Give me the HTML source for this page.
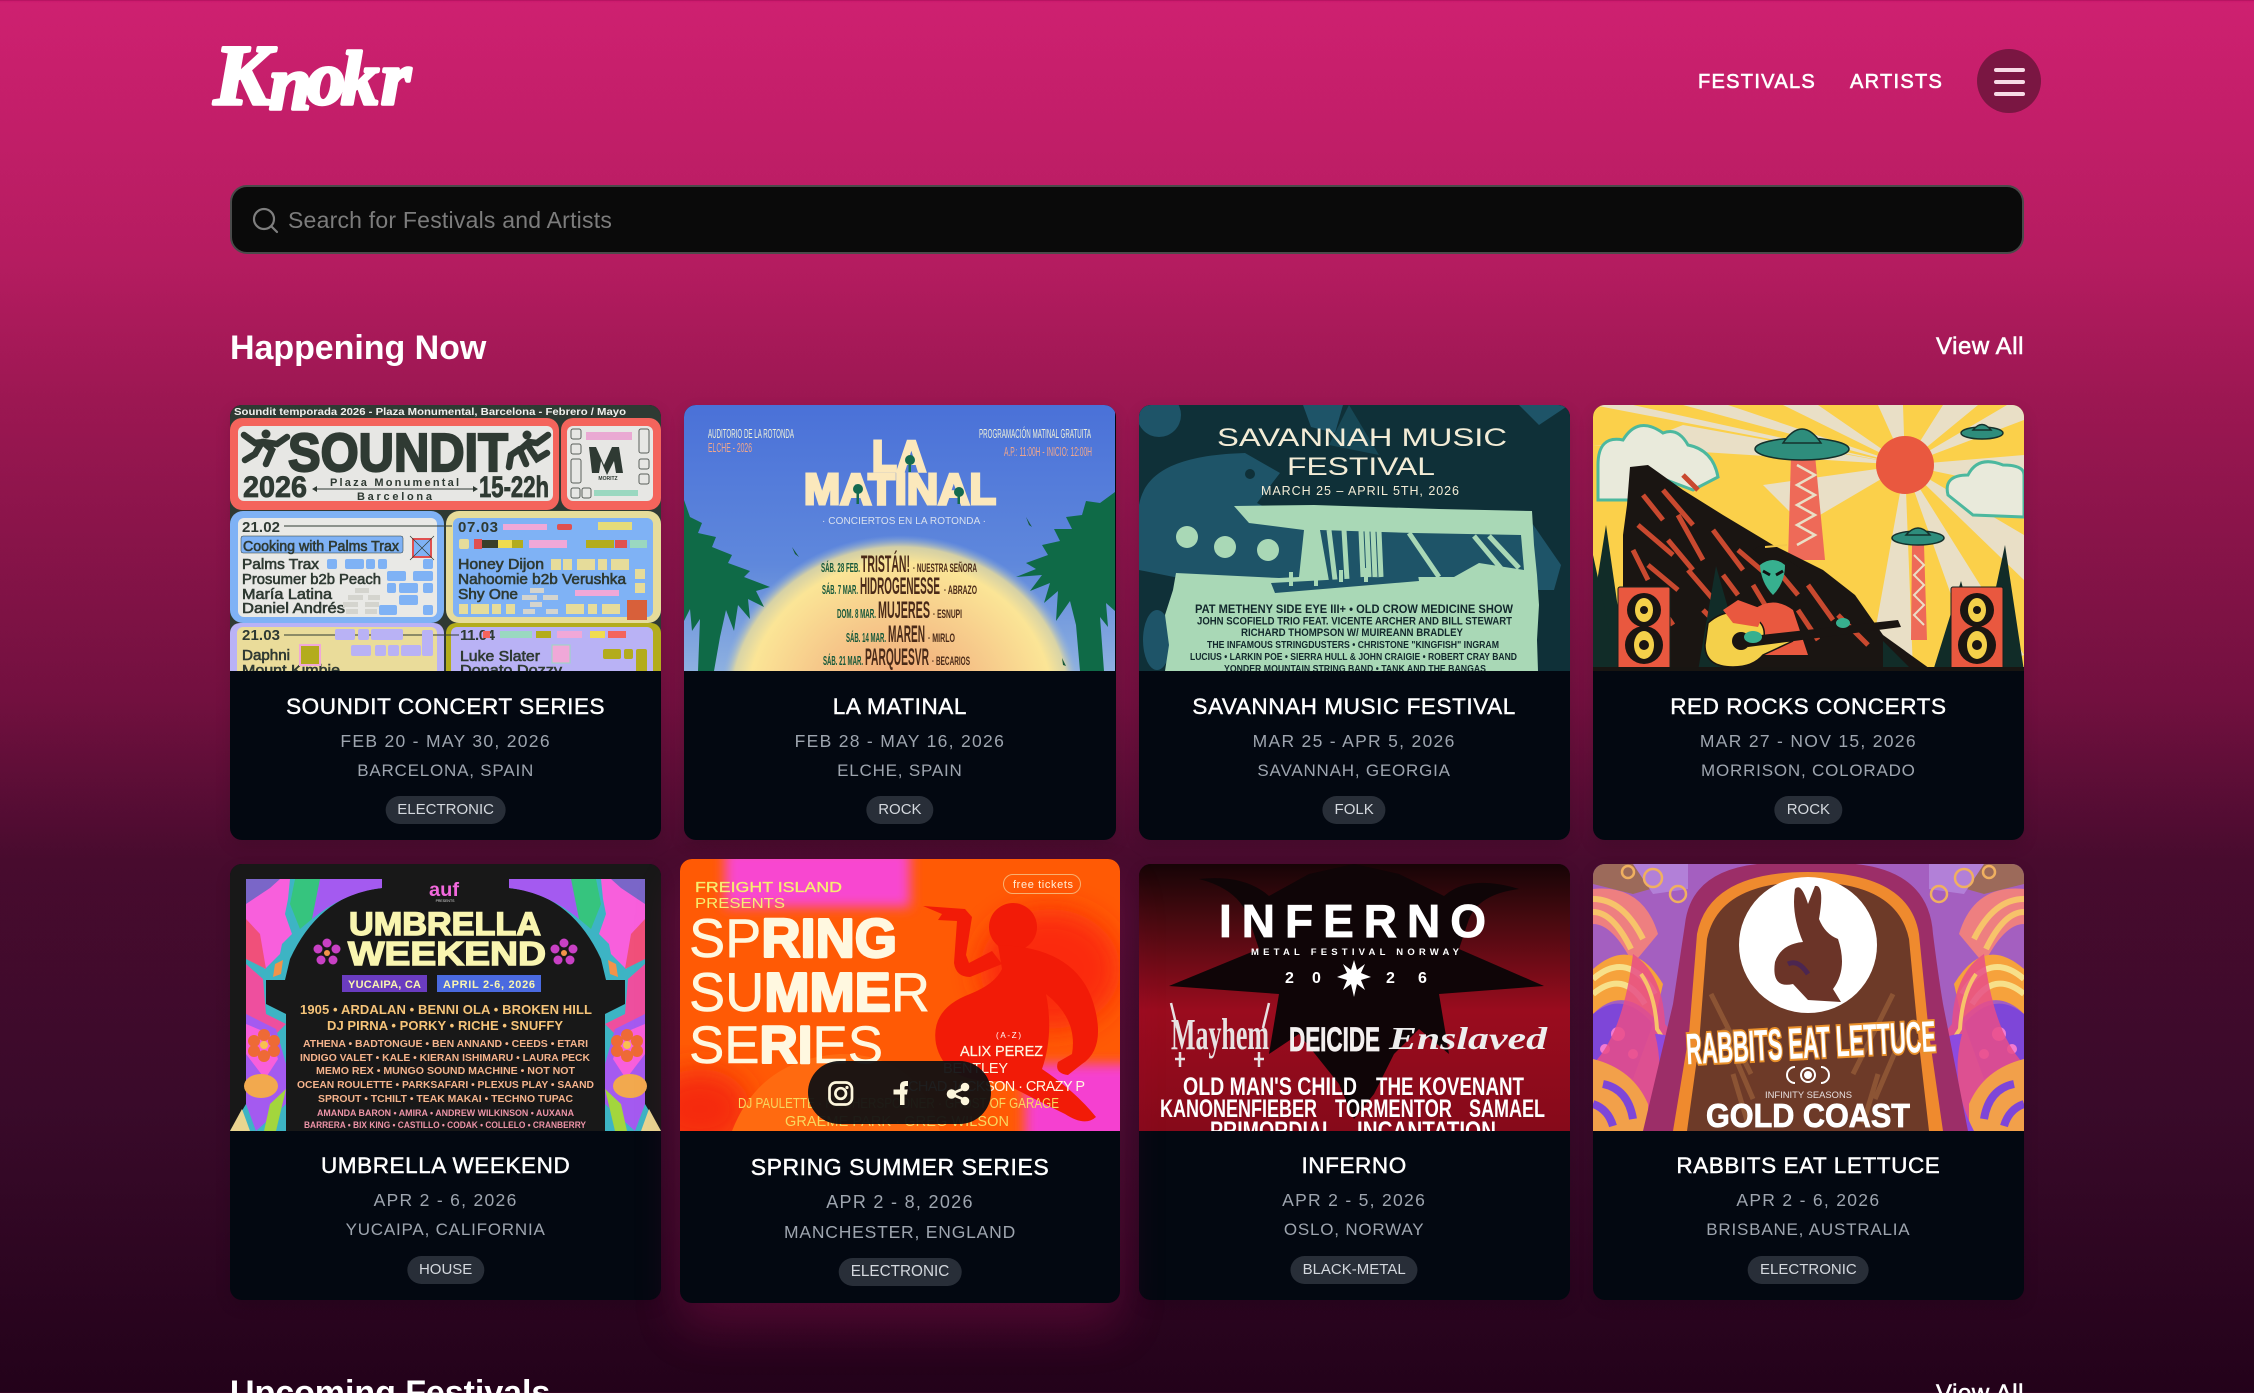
<!DOCTYPE html>
<html lang="en"><head><meta charset="utf-8"><title>Knokr</title>
<style>
*{box-sizing:border-box;margin:0;padding:0}
html,body{width:2254px;height:1393px;overflow:hidden}
body{position:relative;font-family:"Liberation Sans",sans-serif;color:#fff;
background:linear-gradient(180deg,#c9146a 0,#ce2070 3px,#b51c60 260px,#9c1752 400px,#72103f 700px,#480b2e 860px,#3a0a2a 1100px,#23021a 1393px)}
.abs{position:absolute;white-space:nowrap}
.nav{top:70px;font-size:20px;line-height:24px;letter-spacing:1.3px;-webkit-text-stroke:.6px #fff;color:#fff}
.menu{left:1977px;top:49px;width:64px;height:64px;border-radius:50%;background:#7a1642}
.menu i{position:absolute;left:17px;width:31px;height:3.5px;border-radius:2px;background:#f8dbe6}
.search{left:230px;top:185px;width:1794px;height:69px;background:#0a0a0a;border:2.5px solid #4a4a4a;border-radius:17px}
.search span{position:absolute;left:56px;top:20px;font-size:23px;line-height:27px;color:#7c7c7c;letter-spacing:.22px}
.search svg{position:absolute;left:19px;top:19px}
h2{position:absolute;font-size:34px;line-height:40px;font-weight:700;letter-spacing:-.05px;white-space:nowrap}
.va{font-size:24px;line-height:28px;right:230px;-webkit-text-stroke:.55px #fff;letter-spacing:.55px;white-space:nowrap;position:absolute}
.card{position:absolute;background:#030811;border-radius:12px;overflow:hidden;text-align:center;box-shadow:0 6px 16px rgba(0,0,0,.12)}
.card>svg{position:absolute;left:0;top:0;display:block}
.t,.d,.l{position:absolute;left:0;right:0;white-space:nowrap}
.t{font-size:22.5px;line-height:26px;letter-spacing:.58px;-webkit-text-stroke:.45px #fff;color:#fff}
.d{font-size:17.5px;line-height:21px;letter-spacing:1.3px;color:#9ea5af}
.l{font-size:17px;line-height:21px;letter-spacing:.8px;color:#9ea5af}
.p{position:absolute;left:50%;transform:translateX(-50%);height:28px;line-height:28px;border-radius:14px;background:#282e38;color:#d4d8de;font-size:15px;letter-spacing:0;padding:0 12px;white-space:nowrap}
.r1 .t{top:289px}.r1 .d{top:326px}.r1 .l{top:355px}.r1 .p{top:391px}
.r2 .t{top:289px}.r2 .d{top:326px}.r2 .l{top:355px}.r2 .p{top:392px}
.hov{left:680px;top:859px;width:440px;height:444px;box-shadow:0 26px 46px rgba(205,25,105,.22)}
.hov .t{top:295px;font-size:23px;letter-spacing:.55px}
.hov .d{top:333px;font-size:18px}.hov .l{top:363px;font-size:17.5px}.hov .p{top:399px;font-size:15.3px;padding:0 12px;height:28px}
.pill{position:absolute;left:808px;top:1061px;width:183px;height:63px;border-radius:32px;background:rgba(16,16,18,.94)}
svg text{font-family:"Liberation Sans",sans-serif}
</style></head><body>

<svg class="abs" style="left:200px;top:30px" width="240" height="100" viewBox="200 30 240 100">
<text font-size="76" font-weight="700" font-style="italic" fill="#fff" stroke="#fff" stroke-width="3.5" stroke-linejoin="round" style="font-family:'Liberation Serif',serif"><tspan x="214" y="104" font-size="86">K</tspan><tspan x="269" y="109">n</tspan><tspan x="307" y="104">o</tspan><tspan x="341" y="104">k</tspan><tspan x="381" y="104">r</tspan></text>
</svg>
<div class="abs nav" style="left:1698px">FESTIVALS</div>
<div class="abs nav" style="left:1850px">ARTISTS</div>
<div class="abs menu"><i style="top:19px"></i><i style="top:31px"></i><i style="top:43px"></i></div>
<div class="abs search"><svg width="28" height="28" viewBox="0 0 28 28" fill="none" stroke="#7e7e7e" stroke-width="2.2"><circle cx="13" cy="13" r="10"/><path d="M20.5 20.5 26 26" stroke-linecap="round"/></svg><span>Search for Festivals and Artists</span></div>

<h2 style="left:230px;top:328px">Happening Now</h2>
<div class="va" style="top:333px">View All</div>

<!-- Card 1 -->
<div class="card r1" style="left:230px;top:405px;width:431.25px;height:435px">
<svg width="431" height="266" viewBox="0 0 431 266">
<rect width="431" height="266" fill="#2f3a33"/>
<text x="4" y="10" font-size="10.5" font-weight="700" fill="#f0f0ec" textLength="392" lengthAdjust="spacingAndGlyphs">Soundit temporada 2026 - Plaza Monumental, Barcelona - Febrero / Mayo</text>
<rect x="0" y="13" width="329" height="92" rx="12" fill="#f4645c"/><rect x="8" y="21" width="315" height="75" rx="6" fill="#e7e7e4"/>
<rect x="331" y="13" width="100" height="92" rx="12" fill="#f4645c"/><rect x="337" y="21" width="86" height="75" rx="6" fill="#e7e7e4"/>
<text x="58" y="66" font-size="54" font-weight="700" fill="#2f3a33" textLength="220" lengthAdjust="spacingAndGlyphs" stroke="#2f3a33" stroke-width="2.2">SOUNDIT</text>
<g fill="none" stroke="#2f3a33" stroke-width="6.5" stroke-linecap="round">
<path d="M14 30l11 8 8-1 9 8-6 14M15 55l10-6 7-12M33 37l14 2 10-7"/>
<path d="M318 30l-11 8-8-1-9 8 6 14M317 48l-10 6-8-12M290 44l-9 6-2 12"/>
</g><circle cx="36" cy="29" r="4.5" fill="#2f3a33"/><circle cx="297" cy="30" r="4.5" fill="#2f3a33"/>
<text x="13" y="92" font-size="30" font-weight="700" fill="#2f3a33" textLength="64" lengthAdjust="spacingAndGlyphs" stroke="#2f3a33" stroke-width=".8">2026</text>
<text x="249" y="92" font-size="30" font-weight="700" fill="#2f3a33" textLength="70" lengthAdjust="spacingAndGlyphs" stroke="#2f3a33" stroke-width=".8">15-22h</text>
<text x="100" y="81" font-size="11" font-weight="700" fill="#2f3a33" textLength="129">Plaza Monumental</text>
<text x="127" y="95" font-size="11" font-weight="700" fill="#2f3a33" textLength="75">Barcelona</text>
<path d="M83 84h164" stroke="#2f3a33" stroke-width="1"/><path d="M82 84l5-3v6zM248 84l-5-3v6z" fill="#2f3a33"/>
<path d="M347 42l7 0 8 18 8-18 7 0 4 26h-7l-2-12-7 14-6-14-2 12h-7z" transform="translate(12 0)" fill="#2f3a33" />
<text x="378" y="75" font-size="5" font-weight="700" text-anchor="middle" fill="#2f3a33">MORITZ</text>
<g fill="none" stroke="#5a5f5a" stroke-width="1"><rect x="341" y="24" width="10" height="10" rx="2"/><rect x="341" y="39" width="10" height="10" rx="2"/><rect x="341" y="54" width="10" height="24" rx="2"/><rect x="341" y="83" width="9" height="10" rx="2"/><rect x="352" y="83" width="9" height="10" rx="2"/><rect x="409" y="24" width="10" height="24" rx="2"/><rect x="409" y="54" width="10" height="10" rx="2"/><rect x="409" y="69" width="10" height="10" rx="2"/></g>
<rect x="356" y="27" width="46" height="8" fill="#eaa9d3"/><rect x="364" y="85" width="44" height="6" fill="#9ad8c0"/>
<rect x="0" y="106" width="214" height="112" rx="13" fill="#7fb2f5"/><rect x="8" y="113" width="199" height="99" rx="6" fill="#e9e9e6"/>
<rect x="216" y="106" width="215" height="112" rx="13" fill="#e6dc9a"/><rect x="223" y="113" width="200" height="99" rx="6" fill="#7fb2f5"/>
<rect x="0" y="218" width="214" height="60" rx="10" fill="#b9b2f5"/><rect x="7" y="222" width="200" height="60" rx="6" fill="#eadc9a"/>
<rect x="216" y="218" width="215" height="60" rx="10" fill="#b3ac1c"/><rect x="221" y="222" width="202" height="60" rx="6" fill="#b9b2f5"/>
<g fill="#2f3a33" font-weight="700">
<text x="12" y="127" font-size="15" textLength="38">21.02</text>
<text x="228" y="127" font-size="15" textLength="40">07.03</text>
<text x="12" y="235" font-size="15" textLength="38">21.03</text>
<text x="230" y="235" font-size="15" textLength="35">11.04</text>
</g>
<path d="M54 121h168M54 230h175" stroke="#2f3a33" stroke-width="1"/>
<rect x="11" y="131" width="162" height="17" rx="2" fill="#7fb2f5" stroke="#2f3a33" stroke-width=".5"/>
<g font-size="14.5" font-weight="400" fill="#2f3a33" stroke="#2f3a33" stroke-width=".6">
<text x="13" y="146" textLength="156" lengthAdjust="spacingAndGlyphs">Cooking with Palms Trax</text>
<text x="12" y="164" textLength="77" lengthAdjust="spacingAndGlyphs">Palms Trax</text>
<text x="12" y="179" textLength="139" lengthAdjust="spacingAndGlyphs">Prosumer b2b Peach</text>
<text x="12" y="194" textLength="90" lengthAdjust="spacingAndGlyphs">María Latina</text>
<text x="12" y="208" textLength="103" lengthAdjust="spacingAndGlyphs">Daniel Andrés</text>
<text x="228" y="164" textLength="86" lengthAdjust="spacingAndGlyphs">Honey Dijon</text>
<text x="228" y="179" textLength="168" lengthAdjust="spacingAndGlyphs">Nahoomie b2b Verushka</text>
<text x="228" y="194" textLength="60" lengthAdjust="spacingAndGlyphs">Shy One</text>
<text x="12" y="255" textLength="48" lengthAdjust="spacingAndGlyphs">Daphni</text>
<text x="12" y="270" textLength="98" lengthAdjust="spacingAndGlyphs">Mount Kimbie</text>
<text x="230" y="256" textLength="80" lengthAdjust="spacingAndGlyphs">Luke Slater</text>
<text x="230" y="270" textLength="102" lengthAdjust="spacingAndGlyphs">Donato Dozzy</text>
</g>
<g fill="#7fb2f5"><rect x="97" y="154" width="10" height="10" rx="2"/><rect x="115" y="154" width="19" height="10" rx="2"/><rect x="136" y="154" width="9" height="10" rx="2"/><rect x="148" y="154" width="9" height="10" rx="2"/><rect x="193" y="154" width="10" height="10" rx="2"/><rect x="157" y="166" width="19" height="10" rx="2"/><rect x="183" y="166" width="20" height="10" rx="2"/><rect x="157" y="178" width="9" height="10" rx="2"/><rect x="169" y="178" width="19" height="10" rx="2"/><rect x="193" y="178" width="10" height="10" rx="2"/><rect x="169" y="190" width="19" height="10" rx="2"/><rect x="149" y="200" width="18" height="10" rx="2"/><rect x="193" y="200" width="10" height="10" rx="2"/></g>
<g fill="#d4d4ce"><rect x="125" y="183" width="14" height="5"/><rect x="118" y="190" width="15" height="5"/><rect x="138" y="190" width="12" height="5"/><rect x="113" y="197" width="15" height="5"/><rect x="135" y="197" width="14" height="5"/><rect x="116" y="204" width="12" height="5"/><rect x="135" y="204" width="12" height="5"/></g>
<rect x="183" y="134" width="18" height="18" fill="#7fb2f5" stroke="#e05050" stroke-width="2"/><path d="M180 131l24 24M204 131l-24 24" stroke="#2f3a33" stroke-width=".7"/>
<g fill="#e6dc9a"><rect x="229" y="134" width="10" height="10" rx="2"/><rect x="321" y="154" width="10" height="11"/><rect x="333" y="154" width="9" height="11"/><rect x="347" y="154" width="18" height="11"/><rect x="368" y="154" width="9" height="11"/><rect x="381" y="154" width="18" height="11"/><rect x="405" y="164" width="10" height="10"/><rect x="405" y="178" width="10" height="10"/><rect x="229" y="199" width="9" height="10"/><rect x="241" y="199" width="18" height="10"/><rect x="262" y="199" width="9" height="10"/><rect x="276" y="199" width="9" height="10"/><rect x="336" y="199" width="18" height="10"/><rect x="358" y="199" width="9" height="10"/><rect x="372" y="199" width="18" height="10"/></g>
<g><rect x="244" y="134" width="8" height="10" fill="#e05050"/><rect x="252" y="135" width="16" height="8" fill="#3a3f2a"/><rect x="268" y="135" width="14" height="8" fill="#f0dc50"/><rect x="282" y="135" width="11" height="8" fill="#b3ac1c"/><rect x="299" y="135" width="38" height="8" fill="#f0a8d8"/><rect x="356" y="135" width="28" height="8" fill="#b3ac1c"/><rect x="385" y="135" width="12" height="8" fill="#e05050"/><rect x="400" y="135" width="17" height="8" fill="#9ad8c0"/><rect x="327" y="119" width="15" height="6" rx="2" fill="#e05050"/><rect x="368" y="117" width="34" height="8" fill="#e6dc7a"/><rect x="273" y="119" width="44" height="6" fill="#f0a8d8"/><rect x="345" y="185" width="44" height="6" fill="#f0a8d8"/><rect x="397" y="195" width="20" height="20" fill="#d8603a"/></g>
<g fill="#d4d4ce"><rect x="300" y="183" width="14" height="5"/><rect x="292" y="190" width="15" height="5"/><rect x="313" y="190" width="15" height="5"/><rect x="300" y="197" width="12" height="5"/><rect x="293" y="204" width="12" height="5"/><rect x="316" y="204" width="12" height="5"/></g>
<g fill="#b9b2f5"><rect x="105" y="224" width="20" height="11" rx="2"/><rect x="128" y="224" width="11" height="11" rx="2"/><rect x="141" y="224" width="32" height="11" rx="2"/><rect x="192" y="225" width="11" height="26" rx="2"/><rect x="121" y="240" width="20" height="11" rx="2"/><rect x="145" y="240" width="11" height="11" rx="2"/><rect x="158" y="240" width="11" height="11" rx="2"/><rect x="171" y="240" width="20" height="11" rx="2"/></g>
<rect x="70" y="240" width="20" height="20" fill="#b3ac1c" stroke="#f0a8d8" stroke-width="2"/>
<g><rect x="270" y="226" width="32" height="7" fill="#9ad8c0"/><rect x="306" y="226" width="15" height="7" fill="#b3ac1c"/><rect x="327" y="226" width="25" height="7" fill="#f0a8d8"/><rect x="360" y="226" width="15" height="7" fill="#f0dc50"/><rect x="378" y="226" width="18" height="7" fill="#f4645c"/><rect x="253" y="226" width="7" height="7" fill="#f4645c"/><rect x="373" y="244" width="18" height="10" rx="2" fill="#b3ac1c"/><rect x="394" y="244" width="9" height="10" rx="2" fill="#b3ac1c"/><rect x="406" y="244" width="11" height="24" rx="2" fill="#b3ac1c"/></g>
<rect x="322" y="240" width="18" height="18" fill="#f0a8d8" stroke="#9ad8c0" stroke-width="1"/>
</svg>
<div class="t">SOUNDIT CONCERT SERIES</div><div class="d">FEB 20 - MAY 30, 2026</div><div class="l">BARCELONA, SPAIN</div><div class="p">ELECTRONIC</div>
</div>

<!-- Card 2 -->
<div class="card r1" style="left:684.25px;top:405px;width:431.25px;height:435px">
<svg width="431" height="266" viewBox="0 0 431 266">
<defs><linearGradient id="lm" x1="0" y1="0" x2="0" y2="1"><stop offset="0" stop-color="#4a71d8"/><stop offset=".6" stop-color="#5f88dc"/><stop offset="1" stop-color="#8db0e0"/></linearGradient>
<radialGradient id="sun" cx=".5" cy=".5" r=".5"><stop offset="0" stop-color="#f0a072"/><stop offset=".5" stop-color="#f6c88a"/><stop offset=".84" stop-color="#fbe596"/><stop offset=".93" stop-color="#e8dc9c" stop-opacity=".85"/><stop offset="1" stop-color="#8db0e0" stop-opacity="0"/></radialGradient></defs>
<rect width="431" height="266" fill="url(#lm)"/>
<ellipse cx="216" cy="300" rx="182" ry="170" fill="url(#sun)"/>
<g fill="#eef0d8"><text x="24" y="33" font-size="13" textLength="86" lengthAdjust="spacingAndGlyphs">AUDITORIO DE LA ROTONDA</text>
<text x="295" y="33" font-size="13" textLength="112" lengthAdjust="spacingAndGlyphs">PROGRAMACIÓN MATINAL GRATUITA</text></g>
<g fill="#f0a68c"><text x="24" y="47" font-size="13" textLength="44" lengthAdjust="spacingAndGlyphs">ELCHE - 2026</text><text x="320" y="51" font-size="13" textLength="88" lengthAdjust="spacingAndGlyphs">A.P.: 11:00H - INICIO: 12:00H</text></g>
<g fill="#fbe8bc" font-weight="700" stroke="#fbe8bc" stroke-width="3" stroke-linejoin="miter"><text x="188" y="66" font-size="44" textLength="54" lengthAdjust="spacingAndGlyphs">LA</text><text x="120" y="99" font-size="44" textLength="192" lengthAdjust="spacingAndGlyphs">MATINAL</text></g>
<g fill="#146a4f"><circle cx="226" cy="55" r="5"/><rect x="224.5" y="56" width="2.5" height="11"/><circle cx="174" cy="84" r="5"/><rect x="172.5" y="84" width="2.5" height="15"/><circle cx="275" cy="87" r="5"/><rect x="273.5" y="87" width="2.5" height="12"/></g>
<text x="138" y="119" font-size="10" fill="#d8e0ee" textLength="164" lengthAdjust="spacing">· CONCIERTOS EN LA ROTONDA ·</text>
<g font-weight="700">
<g fill="#17583a" font-size="13"><text x="137" y="167" textLength="39" lengthAdjust="spacingAndGlyphs">SÁB. 28 FEB.</text><text x="138" y="189" textLength="36" lengthAdjust="spacingAndGlyphs">SÁB. 7 MAR.</text><text x="153" y="213" textLength="39" lengthAdjust="spacingAndGlyphs">DOM. 8 MAR.</text><text x="162" y="237" textLength="40" lengthAdjust="spacingAndGlyphs">SÁB. 14 MAR.</text><text x="139" y="260" textLength="40" lengthAdjust="spacingAndGlyphs">SÁB. 21 MAR.</text></g>
<g fill="#4a2a18" font-size="24"><text x="177" y="167" textLength="49" lengthAdjust="spacingAndGlyphs">TRISTÁN!</text><text x="176" y="189" textLength="80" lengthAdjust="spacingAndGlyphs">HIDROGENESSE</text><text x="194" y="213" textLength="52" lengthAdjust="spacingAndGlyphs">MUJERES</text><text x="204" y="237" textLength="37" lengthAdjust="spacingAndGlyphs">MAREN</text><text x="181" y="260" textLength="64" lengthAdjust="spacingAndGlyphs">PARQUESVR</text></g>
<g fill="#4a2a18" font-size="12"><text x="229" y="167" textLength="64" lengthAdjust="spacingAndGlyphs">· NUESTRA SEÑORA</text><text x="260" y="189" textLength="33" lengthAdjust="spacingAndGlyphs">· ABRAZO</text><text x="249" y="213" textLength="29" lengthAdjust="spacingAndGlyphs">· ESNUPI</text><text x="244" y="237" textLength="27" lengthAdjust="spacingAndGlyphs">· MIRLO</text><text x="248" y="260" textLength="38" lengthAdjust="spacingAndGlyphs">· BECARIOS</text></g></g>
<g fill="#0f6a47"><path d="M0 95 6 112 18 118 14 128 32 132 28 142 48 150 44 158 66 166 60 172 86 182 72 186 80 202 64 194 66 214 54 200 50 226 42 205 36 232 30 266 14 266 16 214 8 226 6 204 0 216Z"/><path d="M431 87 416 98 402 96 398 110 382 112 388 124 370 124 376 136 358 140 364 150 342 158 352 164 332 172 358 170 346 186 366 178 360 198 374 186 372 216 386 196 392 220 396 266 420 266 416 212 424 222 422 198 431 206Z"/></g>
<path d="M108 142l7 10-4-3zM342 112l6 10-3-2zM378 253l4 8-3-1z" fill="#17583a"/>
</svg>
<div class="t">LA MATINAL</div><div class="d">FEB 28 - MAY 16, 2026</div><div class="l">ELCHE, SPAIN</div><div class="p">ROCK</div>
</div>

<!-- Card 3 -->
<div class="card r1" style="left:1138.5px;top:405px;width:431.25px;height:435px">
<svg width="431" height="266" viewBox="0 0 431 266">
<rect width="431" height="266" fill="#0f3038"/>
<circle cx="20" cy="10" r="22" fill="#1e5468"/><path d="M164 0h40l-8 28-24-6zM380 0h50l-30 20z" fill="#1e5468"/><path d="M210 0l30 50-50-10z" fill="#174755"/>
<ellipse cx="18" cy="235" rx="14" ry="30" fill="#1e5468"/>
<path d="M0 100 C6 66 40 50 106 48 L141 68 L118 98 L170 125 L170 178 L35 172 L0 165Z" fill="#1e5468"/>
<circle cx="111" cy="69" r="5" fill="#0f3038"/>
<path d="M393 118 L422 160 L415 185 L396 185Z" fill="#1e5468"/>
<path d="M95 101 L175 100 L300 104 L393 106 L395 140 L398 170 L400 200 L398 235 L399 266 L26 266 L30 240 L26 210 L34 185 L37 168 L140 173 L160 172 L165 125 L110 118Z" fill="#a9d8b6"/>
<ellipse cx="48" cy="132" rx="11" ry="11" fill="#a9d8b6"/><ellipse cx="86" cy="142" rx="11" ry="11" fill="#a9d8b6"/><ellipse cx="129" cy="145" rx="11" ry="11" fill="#a9d8b6"/>
<path d="M181 125 L275 128 L382 130 L385 165 L340 158 L315 172 L240 172 L190 176 Z" fill="#1e5468"/>
<path d="M190 125l6 50M205 125l3 50M222 126l2 46M228 126l2 46M234 126l2 46M240 126l2 46M270 128l30 44M335 131l30 36M350 131l30 32" stroke="#a9d8b6" stroke-width="5" fill="none"/>
<path d="M132 178 L279 170 L280 176 L136 188Z" fill="#1e5468"/>
<path d="M150 167h4v14h-4zM175 167h4v14h-4zM200 165h4v12h-4zM225 163h4v14h-4z" fill="#a9d8b6"/>
<g fill="#f3ecd6" text-anchor="start"><text x="78" y="41" font-size="25" textLength="290" lengthAdjust="spacingAndGlyphs">SAVANNAH MUSIC</text><text x="148" y="70" font-size="25" textLength="148" lengthAdjust="spacingAndGlyphs">FESTIVAL</text><text x="122" y="90" font-size="12.5" textLength="198">MARCH 25 – APRIL 5TH, 2026</text></g>
<g fill="#12282c" font-weight="700" font-size="12">
<text x="56" y="208" textLength="318" lengthAdjust="spacingAndGlyphs">PAT METHENY SIDE EYE III+ • OLD CROW MEDICINE SHOW</text>
<text x="58" y="219.5" font-size="11" textLength="315" lengthAdjust="spacingAndGlyphs">JOHN SCOFIELD TRIO FEAT. VICENTE ARCHER AND BILL STEWART</text>
<text x="102" y="231" font-size="11" textLength="222" lengthAdjust="spacingAndGlyphs">RICHARD THOMPSON W/ MUIREANN BRADLEY</text>
<text x="68" y="243" font-size="10" textLength="292" lengthAdjust="spacingAndGlyphs">THE INFAMOUS STRINGDUSTERS • CHRISTONE "KINGFISH" INGRAM</text>
<text x="51" y="255" font-size="10" textLength="327" lengthAdjust="spacingAndGlyphs">LUCIUS • LARKIN POE • SIERRA HULL &amp; JOHN CRAIGIE • ROBERT CRAY BAND</text>
<text x="85" y="267" font-size="10" textLength="262" lengthAdjust="spacingAndGlyphs">YONDER MOUNTAIN STRING BAND • TANK AND THE BANGAS</text></g>
</svg>
<div class="t">SAVANNAH MUSIC FESTIVAL</div><div class="d">MAR 25 - APR 5, 2026</div><div class="l">SAVANNAH, GEORGIA</div><div class="p">FOLK</div>
</div>

<!-- Card 4 -->
<div class="card r1" style="left:1592.75px;top:405px;width:431.25px;height:435px">
<svg width="431" height="266" viewBox="0 0 431 266">
<rect width="431" height="266" fill="#fbd04a"/>
<g fill="#e9dfc6"><path d="M312 60 L0 0 L40 0ZM312 60 L90 0 L135 0ZM312 60 L190 0 L225 0ZM312 60 L285 0 L310 0ZM312 60 L350 0 L385 0ZM312 60 L431 -10 L431 15ZM312 60 L431 50 L431 85ZM312 60 L431 130 L431 175ZM312 60 L431 250 L385 266ZM312 60 L320 266 L275 266ZM312 60 L210 120 L170 80ZM312 60 L90 20 L40 40 L0 40Z"/></g>
<path d="M5 60 Q5 30 30 35 Q45 10 70 28 Q85 22 95 40 Q120 45 125 72 L100 85 L60 70 L45 95 L5 95Z" fill="#e9eadb" stroke="#4cb89e" stroke-width="3"/>
<path d="M355 90 Q350 70 375 70 Q385 50 410 60 Q431 60 431 70 L431 112 L380 110 Z" fill="#e9eadb" stroke="#4cb89e" stroke-width="3"/>
<circle cx="312" cy="60" r="29" fill="#e9583f"/>
<path d="M198 50 L222 50 L232 155 L195 155Z" fill="#ee6a58"/><path d="M204 60l18 10-18 10 18 10-18 10 18 10-18 10 18 10-18 10" fill="none" stroke="#e9dfc6" stroke-width="2.5"/>
<path d="M319 140h12l3 95h-16z" fill="#ee6a58"/><path d="M321 150l10 10-10 10 10 10-10 10 10 10-10 10 10 10" stroke="#e9dfc6" stroke-width="2" fill="none"/>
<g fill="#2e8d7c" stroke="#15312c" stroke-width="1.5"><ellipse cx="209" cy="44" rx="47" ry="11"/><path d="M190 38 Q209 10 228 38Z"/><ellipse cx="389" cy="28" rx="21" ry="6"/><path d="M380 25 Q389 14 398 25Z"/><ellipse cx="325" cy="133" rx="26" ry="7"/><path d="M313 130 Q325 116 337 130Z"/></g>
<path d="M37 62 L55 60 L90 85 L130 110 L180 140 L230 165 L262 190 L290 230 L340 266 L30 266 L30 130 L34 100Z" fill="#1a1512"/>
<g stroke="#c9492f" stroke-width="5" fill="none"><path d="M50 90l20 25M70 85l30 35M45 120l35 30M85 110l25 45M120 125l30 40M55 160l30 25M95 165l30 35M145 145l35 30M180 160l25 30M60 190l20 30M40 145l15 30M110 205l30 30M215 180l25 35M245 210l30 30M160 180l15 25M90 70l15 15M130 170l15 20M75 135l25 30M205 205l20 30"/></g>
<g fill="#112c28"><path d="M13 266 L-10 266 L13 120 L34 266ZM410 266 L385 266 L412 140 L431 266Z"/><path d="M0 266V150L13 210 24 266Z"/><path d="M105 266l18 -105 30 105z"/><path d="M340 266l28-90 25 90zM290 266l0-30 30 30z"/></g>
<g fill="#e9583f" stroke="#15211d"><rect x="25" y="182" width="52" height="82" rx="2"/><rect x="358" y="182" width="52" height="82" rx="2"/></g>
<g fill="#1a1512"><circle cx="51" cy="205" r="17"/><circle cx="51" cy="240" r="19"/><circle cx="384" cy="205" r="17"/><circle cx="384" cy="240" r="19"/></g>
<g fill="#f4d04a"><ellipse cx="51" cy="205" rx="9" ry="12"/><ellipse cx="51" cy="240" rx="10" ry="14"/><ellipse cx="384" cy="205" rx="9" ry="12"/><ellipse cx="384" cy="240" rx="10" ry="14"/></g>
<g fill="#1a1512"><circle cx="51" cy="205" r="4"/><circle cx="51" cy="240" r="5"/><circle cx="384" cy="205" r="4"/><circle cx="384" cy="240" r="5"/></g>
<path d="M160 145 Q180 130 195 155 L210 165 L170 165Z" fill="#1a1512"/><path d="M172 142 l22 -2" stroke="#f4c84a" stroke-width="2"/>
<path d="M167 160 Q180 150 192 160 Q192 178 180 190 Q168 178 167 160Z" fill="#37b08f"/><path d="M170 166l7 4M190 166l-7 4" stroke="#111" stroke-width="3"/>
<path d="M160 205 Q180 190 200 205 L215 250 L145 250Z" fill="#e9583f"/>
<path d="M115 218 Q135 200 160 212 Q175 220 170 236 L200 236 L170 250 Q160 262 140 262 Q112 262 112 240Z" fill="#f4d04a" stroke="#1a1512" stroke-width="1.5"/>
<path d="M150 232 L305 215 L308 222 L155 242Z" fill="#1a1512"/><circle cx="148" cy="236" r="9" fill="#1a1512"/>
<path d="M130 205 L145 195 L172 205 L165 222 L140 218Z" fill="#e9583f"/><ellipse cx="160" cy="232" rx="9" ry="6" fill="#37b08f"/><ellipse cx="250" cy="218" rx="7" ry="5" fill="#37b08f"/>
<rect y="262" width="431" height="4" fill="#181512"/>
</svg>
<div class="t">RED ROCKS CONCERTS</div><div class="d">MAR 27 - NOV 15, 2026</div><div class="l">MORRISON, COLORADO</div><div class="p">ROCK</div>
</div>

<!-- Card 5 -->
<div class="card r2" style="left:230px;top:864px;width:431.25px;height:436px">
<svg width="431" height="267" viewBox="0 0 431 267">
<rect width="431" height="267" fill="#181818"/>
<g id="side">
<path d="M16 22 Q16 15 24 15 L152 15 L152 24 Q90 30 60 95 L55 116 L36 116 L36 140 L56 150 L56 267 L0 267 L16 240Z" fill="#3db4c4"/>
<path d="M65 15 L100 15 L95 35 L82 55 L70 65 L60 40Z" fill="#36c47e"/>
<path d="M90 15 L152 15 L152 24 Q115 28 82 55Z" fill="#a45af0"/>
<path d="M16 15 L60 15 L58 35 L55 50 L62 70 L52 80 L50 90 L35 105 L16 85Z" fill="#f85fdc"/>
<path d="M16 55 L30 70 L36 105 L16 95Z" fill="#f0507a"/>
<path d="M16 15 L50 15 L40 24 L16 40Z" fill="#7a66c8"/>
<path d="M16 100 L33 115 L36 150 L56 160 L46 170 L16 150Z" fill="#ee4f9e"/>
<path d="M16 150 L46 165 L56 200 L56 240 L26 267 L16 240Z" fill="#a45af0"/>
<path d="M16 160 L40 170 L48 195 L35 215 L16 190Z" fill="#f85fdc"/>
<g fill="#ee6a36"><circle cx="34" cy="171" r="6"/><circle cx="44" cy="177" r="6"/><circle cx="44" cy="187" r="6"/><circle cx="34" cy="192" r="6"/><circle cx="24" cy="187" r="6"/><circle cx="24" cy="177" r="6"/></g><circle cx="34" cy="181" r="4" fill="#f8c050"/>
<ellipse cx="31" cy="222" rx="17" ry="12" fill="#f2a94e"/>
<path d="M56 225 L46 267 L34 267 L40 240Z" fill="#a3d63d"/>
<path d="M0 267 L12 245 L20 267Z" fill="#e9d690"/>
<path d="M45 100l8 -4 -2 14 -8 3z" fill="#f2934a"/>
</g>
<use href="#side" transform="translate(431 0) scale(-1 1)"/>
<text x="214" y="32" font-size="19" font-weight="700" text-anchor="middle" fill="#f268dc" textLength="30" lengthAdjust="spacingAndGlyphs">auf</text>
<text x="215" y="38" font-size="3.5" text-anchor="middle" fill="#ddd">PRESENTS</text>
<g fill="#f9f5b0" font-weight="700" stroke="#f9f5b0" stroke-width="1.4"><text x="119" y="71" font-size="32" textLength="192" lengthAdjust="spacingAndGlyphs">UMBRELLA</text><text x="118" y="101" font-size="33" textLength="198" lengthAdjust="spacingAndGlyphs">WEEKEND</text></g>
<g fill="#c840c4"><g id="fl"><circle cx="97" cy="79" r="4.5"/><circle cx="106" cy="85" r="4.5"/><circle cx="103" cy="96" r="4.5"/><circle cx="91" cy="96" r="4.5"/><circle cx="88" cy="85" r="4.5"/></g><use href="#fl" x="237"/></g><circle cx="97" cy="89" r="3" fill="#f2934a"/><circle cx="334" cy="89" r="3" fill="#f2934a"/>
<rect x="112" y="111" width="85" height="17" fill="#6a3cc0"/><rect x="207" y="111" width="104" height="17" fill="#4a6ae0"/>
<g font-size="11" font-weight="700" fill="#f9f5b0"><text x="118" y="124" textLength="73">YUCAIPA, CA</text><text x="213" y="124" textLength="92">APRIL 2-6, 2026</text></g>
<g font-weight="700" fill="#f6c479" font-size="13"><text x="70" y="150" textLength="292">1905 • ARDALAN • BENNI OLA • BROKEN HILL</text><text x="97" y="166" textLength="236">DJ PIRNA • PORKY • RICHE • SNUFFY</text></g>
<g font-weight="700" fill="#f5b38c" font-size="10.5"><text x="73" y="183" textLength="285" lengthAdjust="spacingAndGlyphs">ATHENA • BADTONGUE • BEN ANNAND • CEEDS • ETARI</text><text x="70" y="197" textLength="290" lengthAdjust="spacingAndGlyphs">INDIGO VALET • KALE • KIERAN ISHIMARU • LAURA PECK</text><text x="86" y="210" textLength="259" lengthAdjust="spacingAndGlyphs">MEMO REX • MUNGO SOUND MACHINE • NOT NOT</text><text x="67" y="224" textLength="297" lengthAdjust="spacingAndGlyphs">OCEAN ROULETTE • PARKSAFARI • PLEXUS PLAY • SAAND</text><text x="88" y="238" textLength="255" lengthAdjust="spacingAndGlyphs">SPROUT • TCHILT • TEAK MAKAI • TECHNO TUPAC</text></g>
<g font-weight="700" fill="#ee94a8" font-size="9"><text x="87" y="252" textLength="257" lengthAdjust="spacingAndGlyphs">AMANDA BARON • AMIRA • ANDREW WILKINSON • AUXANA</text><text x="74" y="264" textLength="282" lengthAdjust="spacingAndGlyphs">BARRERA • BIX KING • CASTILLO • CODAK • COLLELO • CRANBERRY</text></g>
</svg>
<div class="t">UMBRELLA WEEKEND</div><div class="d">APR 2 - 6, 2026</div><div class="l">YUCAIPA, CALIFORNIA</div><div class="p">HOUSE</div>
</div>

<!-- Card 7 -->
<div class="card r2" style="left:1138.5px;top:864px;width:431.25px;height:436px">
<svg width="431" height="267" viewBox="0 0 431 267">
<defs><linearGradient id="inf" x1="0" y1="0" x2="0" y2="1"><stop offset="0" stop-color="#160406"/><stop offset=".22" stop-color="#4a0a10"/><stop offset=".55" stop-color="#9a0c1e"/><stop offset="1" stop-color="#860a1a"/></linearGradient></defs>
<rect width="431" height="267" fill="url(#inf)"/>
<path d="M60 15 Q105 10 130 32 L170 10 L215 0 L260 10 L305 32 Q330 10 380 25 Q340 30 330 55 L320 85 L405 122 L300 130 L310 190 L280 165 L255 190 L235 230 L215 255 L200 220 L180 195 L160 170 L130 190 L140 130 L30 122 L120 85 L110 55 Q100 25 60 15Z" fill="#0f0507"/>
<g fill="#fff" font-weight="700"><text x="80" y="73" font-size="46" textLength="267" lengthAdjust="spacing" stroke="#fff" stroke-width=".8">INFERNO</text>
<text x="112" y="91" font-size="9.5" textLength="208" lengthAdjust="spacing">METAL FESTIVAL NORWAY</text>
<text x="146" y="119" font-size="16">2</text><text x="173" y="119" font-size="16">0</text><text x="247" y="119" font-size="16">2</text><text x="279" y="119" font-size="16">6</text></g>
<path d="M215 96l3 10 8-6-4 9 10 4-10 3 4 10-8-6-3 13-3-13-8 6 4-10-10-3 10-4-4-9 8 6z" fill="#fff"/>
<text x="32" y="185" font-size="44" font-weight="700" fill="#e8e2e2" textLength="98" lengthAdjust="spacingAndGlyphs" style="font-family:'Liberation Serif',serif">Mayhem</text>
<path d="M36 195h10M41 188v15M115 195h10M120 188v15M32 139l6 25M130 139l-6 25" stroke="#e8e2e2" stroke-width="2.5" fill="none"/>
<text x="150" y="187" font-size="34" font-weight="700" fill="#f4f0f0" textLength="91" lengthAdjust="spacingAndGlyphs" stroke="#f4f0f0" stroke-width=".8">DEICIDE</text>
<text x="250" y="185" font-size="32" font-weight="700" font-style="italic" fill="#eee" textLength="158" lengthAdjust="spacingAndGlyphs" style="font-family:'Liberation Serif',serif">Enslaved</text>
<g fill="#fff" font-weight="700" font-size="25">
<text x="44" y="231" textLength="174" lengthAdjust="spacingAndGlyphs">OLD MAN'S CHILD</text><text x="237" y="231" textLength="148" lengthAdjust="spacingAndGlyphs">THE KOVENANT</text>
<text x="21" y="253" textLength="157" lengthAdjust="spacingAndGlyphs">KANONENFIEBER</text><text x="196" y="253" textLength="117" lengthAdjust="spacingAndGlyphs">TORMENTOR</text><text x="330" y="253" textLength="76" lengthAdjust="spacingAndGlyphs">SAMAEL</text>
<text x="71" y="275" textLength="124" lengthAdjust="spacingAndGlyphs">PRIMORDIAL</text><text x="218" y="275" textLength="139" lengthAdjust="spacingAndGlyphs">INCANTATION</text></g>
</svg>
<div class="t">INFERNO</div><div class="d">APR 2 - 5, 2026</div><div class="l">OSLO, NORWAY</div><div class="p">BLACK-METAL</div>
</div>

<!-- Card 8 -->
<div class="card r2" style="left:1592.75px;top:864px;width:431.25px;height:436px">
<svg width="431" height="267" viewBox="0 0 431 267">
<rect width="431" height="267" fill="#a45fc0"/>
<g id="rl">
<path d="M0 0H75V20L40 30 0 20Z" fill="#9c6a5a"/><path d="M40 0H95V25L60 30Z" fill="#b280d8"/>
<g fill="none" stroke="#f0b060" stroke-width="2.5"><circle cx="60" cy="14" r="9"/><circle cx="85" cy="30" r="8"/><circle cx="35" cy="8" r="6"/></g>
<path d="M0 25 Q50 20 65 70 L40 100 Q20 60 0 60Z" fill="#ee7f80"/><path d="M0 35 Q30 35 50 75M0 48 Q20 48 38 85" stroke="#f7c36a" stroke-width="6" fill="none"/>
<path d="M0 105 Q40 70 70 120 L62 155 Q30 120 0 150Z" fill="#f6a23c"/><path d="M0 115 Q35 85 62 130M0 130 Q30 105 52 140" stroke="#f7e08a" stroke-width="6" fill="none"/>
<path d="M0 150 Q30 125 60 160 L40 215 L0 195Z" fill="#7e46d8"/><circle cx="25" cy="170" r="7" fill="#f37ad0"/><circle cx="40" cy="190" r="5" fill="#f37ad0"/><circle cx="12" cy="185" r="5" fill="#f37ad0"/>
<path d="M40 90 Q70 110 72 160 Q90 180 95 215 L90 267 L0 267 V200 Q30 170 40 90Z" fill="#e84e88" opacity=".85"/>
<path d="M48 110 Q62 130 64 165 Q78 185 84 215" stroke="#f7c36a" stroke-width="4" fill="none"/>
<path d="M0 195 Q40 205 55 240 L55 267 H0Z" fill="#f2a04a"/><path d="M10 220 Q35 225 40 255M0 240 Q15 245 20 262" stroke="#7e46d8" stroke-width="8" fill="none"/>
<path d="M62 170 Q105 170 100 240 L85 267 H50 Q75 220 62 170Z" fill="#8d4ae0"/><circle cx="80" cy="205" r="8" fill="#d64fc8"/><circle cx="72" cy="240" r="6" fill="#d64fc8"/>
</g>
<use href="#rl" transform="translate(431 0) scale(-1 1)"/>
<path d="M92 60 Q100 -10 215 0 Q335 -10 340 70 Q345 110 350 140 L375 267 H50 L80 140Z" fill="#9c2e68"/>
<path d="M104 70 Q116 8 215 8 Q316 8 326 70 L336 170 L350 267 H80 L96 170Z" fill="#ef8a2e"/>
<path d="M114 75 Q126 18 215 18 Q304 18 316 75 L326 180 L336 267 H94 L106 180Z" fill="#6d3a28"/>
<g stroke="#8c5434" stroke-width="5" fill="none"><path d="M118 130l40 80M130 165l30 70M300 130l-40 80M312 165l-30 70M140 210l15 50M285 210l-15 50"/></g>
<ellipse cx="215" cy="81" rx="69" ry="68" fill="#fff"/>
<path d="M202 25 Q208 18 215 40 L222 22 Q232 20 226 55 Q232 70 245 75 Q255 105 240 125 L248 138 L215 136 L200 120 Q178 125 182 98 Q188 80 210 78 Q198 50 202 25Z" fill="#6b3428"/>
<path d="M195 100 Q205 95 215 110" stroke="#4c2650" stroke-width="5" fill="none"/>
<g font-weight="700"><text x="93" y="194" font-size="44" fill="#f6a92e" stroke="#e9902a" stroke-width="4" textLength="250" lengthAdjust="spacingAndGlyphs" transform="rotate(-3 215 180)">RABBITS EAT LETTUCE</text>
<text x="93" y="194" font-size="44" fill="#fff" textLength="250" lengthAdjust="spacingAndGlyphs" transform="rotate(-3 215 180)">RABBITS EAT LETTUCE</text></g>
<g fill="none" stroke="#fff" stroke-width="2"><circle cx="215" cy="211" r="7"/><path d="M202 203a8 8 0 0 0 0 16M228 203a8 8 0 0 1 0 16"/></g><circle cx="215" cy="211" r="4" fill="#fff"/>
<text x="172" y="234" font-size="9" fill="#e8e0e0" textLength="87" lengthAdjust="spacingAndGlyphs">INFINITY SEASONS</text>
<text x="113" y="263" font-size="33" font-weight="700" fill="#fff" textLength="204" lengthAdjust="spacingAndGlyphs" stroke="#fff" stroke-width=".8">GOLD COAST</text>
</svg>
<div class="t">RABBITS EAT LETTUCE</div><div class="d">APR 2 - 6, 2026</div><div class="l">BRISBANE, AUSTRALIA</div><div class="p">ELECTRONIC</div>
</div>

<!-- Hover card 6 -->
<div class="card hov">
<svg width="440" height="272" viewBox="0 0 440 272">
<defs><filter id="b1" x="-30%" y="-30%" width="160%" height="160%"><feGaussianBlur stdDeviation="6"/></filter><filter id="b2" x="-30%" y="-30%" width="160%" height="160%"><feGaussianBlur stdDeviation="14"/></filter></defs>
<rect width="440" height="272" fill="#ff5a05"/>
<rect x="45" y="-10" width="185" height="58" fill="#f847d0" filter="url(#b1)"/>
<ellipse cx="370" cy="110" rx="70" ry="60" fill="#fb2a0a" filter="url(#b2)"/>
<rect x="345" y="205" width="110" height="80" fill="#f53fd0" filter="url(#b1)"/>
<ellipse cx="20" cy="250" rx="50" ry="40" fill="#f52a0e" filter="url(#b2)"/>
<path d="M52 272 Q80 200 160 195 Q240 195 260 272Z" fill="#ff6a10"/>
<g fill="#f21b07"><circle cx="333" cy="68" r="24"/>
<path d="M243 47 L285 50 L292 58 L286 96 L289 104 L312 92 L322 105 L290 118 Q276 118 274 104 L277 62 L258 61 L262 55Z"/>
<path d="M318 86 Q400 88 415 150 Q425 190 402 205 L388 216 Q374 214 378 203 L392 195 Q398 160 366 135 Q374 175 362 210 Q395 232 416 258 Q405 268 385 255 Q350 238 320 222 Q265 225 256 185 Q250 150 290 135 Q315 125 322 110 Z"/></g>
<g fill="#fff8e0" stroke="#fff8e0" stroke-linejoin="round">
<text x="9" y="98" font-size="55" textLength="208" lengthAdjust="spacingAndGlyphs" stroke-width=".5"><tspan>SP</tspan><tspan font-weight="700" stroke-width="2.5">RING</tspan></text>
<text x="9" y="152" font-size="55" textLength="241" lengthAdjust="spacingAndGlyphs" stroke-width=".5"><tspan>SU</tspan><tspan font-weight="700" stroke-width="2.5">MME</tspan><tspan>R</tspan></text>
<text x="9" y="204" font-size="53" textLength="194" lengthAdjust="spacingAndGlyphs" stroke-width=".5"><tspan>SE</tspan><tspan font-weight="700" stroke-width="2.5">RI</tspan><tspan>ES</tspan></text></g>
<g fill="#f6ee70"><text x="15" y="33" font-size="15" textLength="147" lengthAdjust="spacingAndGlyphs" stroke="#f6ee70" stroke-width=".3">FREIGHT ISLAND</text><text x="15" y="49" font-size="15" textLength="90" lengthAdjust="spacingAndGlyphs">PRESENTS</text></g>
<rect x="323.5" y="15.5" width="77" height="19" rx="9.5" fill="none" stroke="#f8b070" stroke-width="1"/>
<text x="333" y="29" font-size="11" fill="#fff0d8" textLength="60">free tickets</text>
<text x="316" y="179" font-size="8" fill="#fff" textLength="25">(A-Z)</text>
<g fill="#fff6e0" font-size="14.5"><text x="280" y="197" textLength="83" stroke="#fff6e0" stroke-width=".2">ALIX PEREZ</text><text x="263" y="214" textLength="65">BENTLEY</text><text x="228" y="232" textLength="177">CHAD JACKSON · CRAZY P</text></g>
<g fill="#f8d860" font-size="14.5"><text x="58" y="249" textLength="321" lengthAdjust="spacingAndGlyphs">DJ PAULETTE · FISCHERSPOONER · GHOST OF GARAGE</text><text x="105" y="267" textLength="224">GRAEME PARK · GREG WILSON</text></g>
</svg>
<div class="t">SPRING SUMMER SERIES</div><div class="d">APR 2 - 8, 2026</div><div class="l">MANCHESTER, ENGLAND</div><div class="p">ELECTRONIC</div>
</div>

<div class="pill">
<svg width="183" height="63" viewBox="0 0 183 63" style="position:absolute;left:0;top:0">
<g fill="none" stroke="#fdf6dc" stroke-width="2.7"><rect x="21.5" y="21.5" width="22.5" height="22" rx="6.5"/><circle cx="32.7" cy="32.5" r="5.3"/></g><circle cx="39" cy="26.5" r="1.6" fill="#fdf6dc"/>
<path d="M92 44V33.5H85.5V28.5H92V25Q92 20 98 20H100V25H98Q96.5 25 96.5 26.5V28.5H99.7L99 33.5H96.5V44Z" fill="#fdf6dc"/>
<path d="M157 27 143 33M143 33 157 39" stroke="#fdf6dc" stroke-width="2.6"/><circle cx="157" cy="26" r="4.3" fill="#fdf6dc"/><circle cx="143.5" cy="33" r="4.8" fill="#fdf6dc"/><circle cx="157" cy="40" r="4.3" fill="#fdf6dc"/>
</svg></div>

<h2 style="left:230px;top:1373px">Upcoming Festivals</h2>
<div class="va" style="top:1380px">View All</div>
</body></html>
